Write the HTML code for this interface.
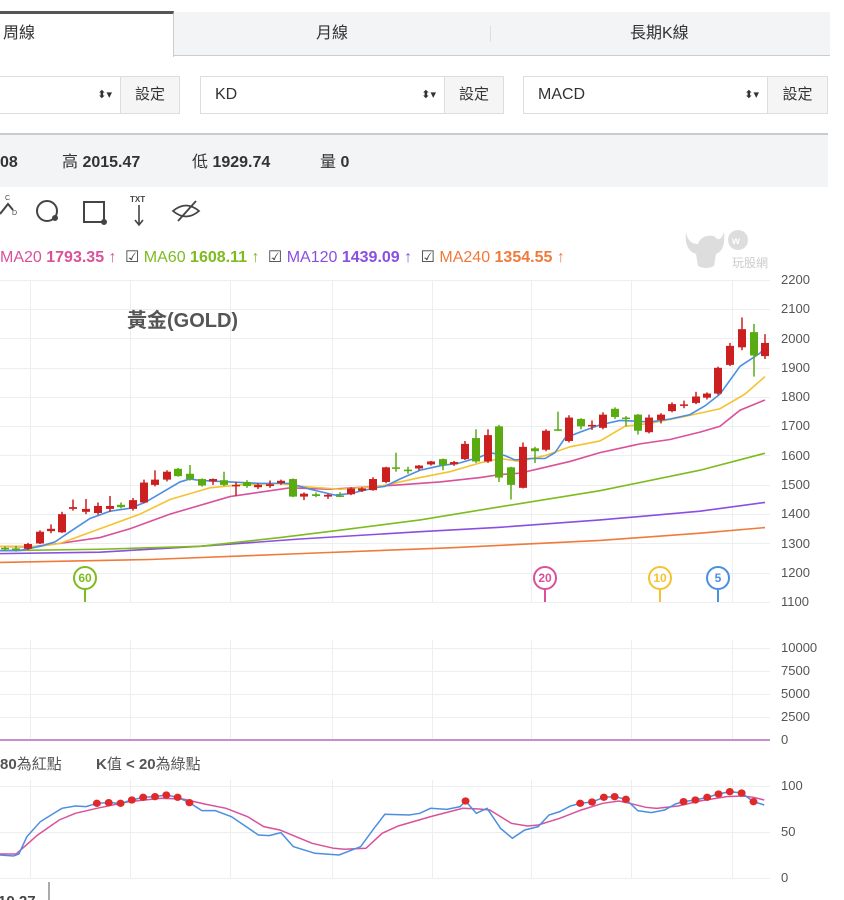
<!DOCTYPE html>
<html><head><meta charset="utf-8"><style>
*{margin:0;padding:0;box-sizing:border-box}
body{width:844px;height:900px;overflow:hidden;background:#fff;font-family:"Liberation Sans","Noto Sans CJK TC",sans-serif;color:#333;position:relative}
.abs{position:absolute}
.tab{position:absolute;top:12px;height:44px;font-size:16px;line-height:44px;color:#333}
.sel{position:absolute;top:76px;height:38px;border:1px solid #ddd;background:#fff;font-size:16px;line-height:36px;padding-left:14px}
.btn{position:absolute;top:76px;height:38px;border:1px solid #ddd;background:#f5f5f5;font-size:15px;line-height:36px;text-align:center}
.arr{position:absolute;right:8px;top:0;font-size:11px;color:#333}
.ax{position:absolute;left:781px;font-size:13px;color:#555}
.inf{position:absolute;top:153px;font-size:16px;color:#333;white-space:nowrap;line-height:20px}
</style></head><body>
<div class="abs" style="left:0;top:12px;width:830px;height:44px;background:#f3f4f5;border-bottom:1px solid #ccc"></div>
<div class="abs" style="left:0;top:11px;width:174px;height:46px;background:#fff;border-top:3px solid #555;border-right:1px solid #ccc"></div>
<div class="tab" style="left:3px">周線</div>
<div class="tab" style="left:316px">月線</div>
<div class="abs" style="left:490px;top:26px;width:1px;height:16px;background:#ddd"></div>
<div class="tab" style="left:630px">長期K線</div>
<div class="sel" style="left:-2px;width:123px"><span class="arr">⬍▾</span></div>
<div class="btn" style="left:120px;width:60px">設定</div>
<div class="sel" style="left:200px;width:245px">KD<span class="arr">⬍▾</span></div>
<div class="btn" style="left:444px;width:60px">設定</div>
<div class="sel" style="left:523px;width:245px">MACD<span class="arr">⬍▾</span></div>
<div class="btn" style="left:767px;width:61px">設定</div>
<div class="abs" style="left:0;top:133px;width:828px;height:54px;background:#f3f4f6;border-top:2px solid #c8ccd0"></div>
<div class="inf" style="left:0"><b>08</b></div>
<div class="inf" style="left:62px">高 <b>2015.47</b></div>
<div class="inf" style="left:192px">低 <b>1929.74</b></div>
<div class="inf" style="left:320px">量 <b>0</b></div>
<svg class="abs" style="left:0;top:192px" width="220" height="40" fill="none" stroke="#444" stroke-width="2">
<text x="5" y="8" font-size="7" fill="#444" stroke="none" font-family="Liberation Sans">C</text>
<path d="M0 22 L8 12 L13 18"/>
<text x="12" y="23" font-size="7" fill="#444" stroke="none" font-family="Liberation Sans">D</text>
<circle cx="47" cy="19" r="10"/><circle cx="55" cy="26" r="2" fill="#444"/>
<rect x="84" y="10" width="20" height="20"/><circle cx="104" cy="30" r="2" fill="#444"/>
<text x="130" y="10" font-size="8" font-weight="bold" fill="#444" stroke="none" font-family="Liberation Sans">TXT</text>
<path d="M139 13 V32 M135 28 L139 33 L143 28" stroke-width="1.6"/>
<path d="M173 19 Q186 8 199 19 Q186 30 173 19 Z" stroke-width="1.8"/><path d="M178 29 L196 9" stroke-width="1.8"/>
</svg>
<div class="abs" style="left:0;top:247px;font-size:16px;white-space:nowrap">
<span style="color:#d9519a">MA20 <b>1793.35</b> ↑</span>
<span style="color:#444;margin-left:4px">☑</span> <span style="color:#7dbb1e">MA60 <b>1608.11</b> ↑</span>
<span style="color:#444;margin-left:4px">☑</span> <span style="color:#8a4fe0">MA120 <b>1439.09</b> ↑</span>
<span style="color:#444;margin-left:4px">☑</span> <span style="color:#f07a3a">MA240 <b>1354.55</b> ↑</span>
</div>
<svg class="abs" style="left:680px;top:224px" width="90" height="48">
<path d="M6 8 Q8 20 18 20 Q22 10 34 12 Q40 20 44 8 Q46 26 36 30 L34 42 Q26 46 18 42 L16 30 Q4 26 6 8Z" fill="#ddd"/>
<circle cx="58" cy="16" r="10" fill="#ddd"/><text x="52" y="20" font-size="10" font-weight="bold" fill="#fff">w</text>
<text x="52" y="43" font-size="12" fill="#ccc" font-family="Noto Sans CJK TC">玩股網</text>
</svg>
<div class="ax" style="top:272px">2200</div><div class="ax" style="top:301px">2100</div><div class="ax" style="top:331px">2000</div><div class="ax" style="top:360px">1900</div><div class="ax" style="top:389px">1800</div><div class="ax" style="top:418px">1700</div><div class="ax" style="top:448px">1600</div><div class="ax" style="top:477px">1500</div><div class="ax" style="top:506px">1400</div><div class="ax" style="top:536px">1300</div><div class="ax" style="top:565px">1200</div><div class="ax" style="top:594px">1100</div>
<div class="ax" style="top:640px">10000</div><div class="ax" style="top:663px">7500</div><div class="ax" style="top:686px">5000</div><div class="ax" style="top:709px">2500</div><div class="ax" style="top:732px">0</div>
<div class="ax" style="top:778px">100</div><div class="ax" style="top:824px">50</div><div class="ax" style="top:870px">0</div>
<svg class="abs" style="left:0;top:0" width="844" height="900">
<g stroke="#eceef0" stroke-width="1">
<path d="M0 280.5H770M0 309.5H770M0 338.5H770M0 368.5H770M0 397.5H770M0 426.5H770M0 455.5H770M0 485.5H770M0 514.5H770M0 543.5H770M0 573.5H770M0 602.5H770"/>
<path d="M30.5 280V602M130.5 280V602M230.5 280V602M332.5 280V602M432.5 280V602M531.5 280V602M631.5 280V602M732.5 280V602"/>
<path d="M0 648.5H770M0 671.5H770M0 694.5H770M0 717.5H770"/>
<path d="M30.5 640V740M130.5 640V740M230.5 640V740M332.5 640V740M432.5 640V740M531.5 640V740M631.5 640V740M732.5 640V740"/>
<path d="M0 786.5H770M0 832.5H770M0 878.5H770"/>
<path d="M30.5 780V878M130.5 780V878M230.5 780V878M332.5 780V878M432.5 780V878M531.5 780V878M631.5 780V878M732.5 780V878"/>
</g>
<line x1="0" y1="740" x2="770" y2="740" stroke="#c68fd0" stroke-width="2"/>
<text x="127" y="327" font-size="20" font-weight="bold" fill="#555" font-family="Liberation Sans,Noto Sans CJK TC">黃金(GOLD)</text>
<g transform="translate(0,923.9) scale(1,-0.2927)" fill="none" stroke-width="1.6">
<polyline vector-effect="non-scaling-stroke" stroke="#f07a3a" points="0,1235 150,1245 300,1265 450,1285 600,1310 700,1335 765,1354"/>
<polyline vector-effect="non-scaling-stroke" stroke="#8a4fe0" points="0,1265 100,1270 200,1290 300,1315 420,1340 500,1355 600,1380 700,1410 765,1440"/>
<polyline vector-effect="non-scaling-stroke" stroke="#7dbb1e" points="0,1275 100,1280 200,1290 280,1320 340,1345 420,1380 500,1425 600,1480 700,1550 765,1608"/>
<polyline vector-effect="non-scaling-stroke" stroke="#d9519a" points="0,1290 30,1288 60,1300 100,1320 130,1350 170,1400 230,1460 290,1490 330,1485 400,1500 440,1510 480,1525 500,1535 520,1540 545,1560 570,1580 600,1610 640,1640 670,1655 700,1680 720,1700 740,1755 765,1790"/>
<polyline vector-effect="non-scaling-stroke" stroke="#f5c230" points="0,1290 40,1290 60,1300 100,1350 140,1400 170,1450 210,1490 240,1500 280,1505 300,1495 340,1485 380,1495 420,1525 450,1545 480,1575 500,1590 520,1580 545,1600 570,1630 600,1650 625,1700 650,1710 680,1730 720,1760 745,1810 765,1870"/>
<polyline vector-effect="non-scaling-stroke" stroke="#4a8fe0" points="0,1275 20,1276 40,1290 55,1305 70,1340 90,1385 110,1410 130,1420 145,1440 160,1470 180,1510 190,1520 200,1515 230,1510 260,1505 290,1505 310,1485 335,1465 350,1470 375,1490 385,1495 400,1520 420,1550 440,1565 460,1575 480,1595 490,1610 505,1600 515,1585 530,1590 545,1590 555,1610 565,1660 580,1680 600,1705 620,1720 650,1715 670,1725 690,1740 705,1770 720,1810 740,1905 760,1950 765,1970"/>
</g>
<g id="candles"></g>
<g font-family="Liberation Sans" font-size="12" font-weight="bold" text-anchor="middle" fill="#fff" stroke-width="2">
<line x1="85" y1="590" x2="85" y2="602" stroke="#7dbb1e"/><circle cx="85" cy="578" r="11" stroke="#7dbb1e"/><text x="85" y="582" fill="#7dbb1e">60</text>
<line x1="545" y1="590" x2="545" y2="602" stroke="#d9519a"/><circle cx="545" cy="578" r="11" stroke="#d9519a"/><text x="545" y="582" fill="#d9519a">20</text>
<line x1="660" y1="590" x2="660" y2="602" stroke="#f5c230"/><circle cx="660" cy="578" r="11" stroke="#f5c230"/><text x="660" y="582" fill="#f5c230">10</text>
<line x1="718" y1="590" x2="718" y2="602" stroke="#4a8fe0"/><circle cx="718" cy="578" r="11" stroke="#4a8fe0"/><text x="718" y="582" fill="#4a8fe0">5</text>
</g>
<text x="0" y="769" font-size="15" font-weight="bold" fill="#555" font-family="Liberation Sans,Noto Sans CJK TC">80<tspan font-weight="normal">為紅點</tspan></text>
<text x="96" y="769" font-size="15" font-weight="bold" fill="#555" font-family="Liberation Sans,Noto Sans CJK TC">K<tspan font-weight="normal">值</tspan> &lt; 20<tspan font-weight="normal">為綠點</tspan></text>
<g transform="translate(0,600) scale(0.5382,0.3333)" fill="none" stroke-width="1.5">
<polyline vector-effect="non-scaling-stroke" stroke="#d9519a" points="0,762 30,762 70,705 110,660 140,640 180,625 240,605 300,595 340,597 380,612 420,625 460,650 490,680 520,690 550,710 580,730 620,745 640,748 680,745 710,700 740,678 800,650 860,625 890,627 910,630 950,670 980,678 1000,675 1040,655 1080,630 1120,610 1150,603 1170,610 1200,622 1220,625 1260,618 1300,603 1350,590 1380,588 1400,592 1420,600"/>
<polyline vector-effect="non-scaling-stroke" stroke="#4a8fe0" points="0,765 25,768 35,762 50,710 75,665 115,625 140,618 160,620 180,610 202,608 224,610 245,600 266,592 288,590 309,585 330,592 352,608 375,632 400,632 430,650 460,683 480,705 500,707 522,698 545,740 585,760 630,765 670,740 695,685 715,643 760,645 780,640 800,625 830,628 855,620 865,603 885,640 905,625 930,685 952,715 975,690 1000,680 1020,645 1040,635 1060,618 1078,610 1100,606 1122,592 1142,590 1163,598 1185,632 1210,638 1235,630 1255,612 1270,605 1292,600 1314,592 1335,582 1356,575 1378,579 1400,605 1420,615"/>
<g fill="#e02a2a" stroke="none">
<ellipse cx="180" cy="610" rx="7.4" ry="11"/><ellipse cx="202" cy="608" rx="7.4" ry="11"/><ellipse cx="224" cy="610" rx="7.4" ry="11"/><ellipse cx="245" cy="600" rx="7.4" ry="11"/><ellipse cx="266" cy="592" rx="7.4" ry="11"/><ellipse cx="288" cy="590" rx="7.4" ry="11"/><ellipse cx="309" cy="585" rx="7.4" ry="11"/><ellipse cx="330" cy="592" rx="7.4" ry="11"/><ellipse cx="352" cy="608" rx="7.4" ry="11"/>
<ellipse cx="865" cy="603" rx="7.4" ry="11"/>
<ellipse cx="1078" cy="610" rx="7.4" ry="11"/><ellipse cx="1100" cy="606" rx="7.4" ry="11"/><ellipse cx="1122" cy="592" rx="7.4" ry="11"/><ellipse cx="1142" cy="590" rx="7.4" ry="11"/><ellipse cx="1163" cy="598" rx="7.4" ry="11"/>
<ellipse cx="1270" cy="605" rx="7.4" ry="11"/><ellipse cx="1292" cy="600" rx="7.4" ry="11"/><ellipse cx="1314" cy="592" rx="7.4" ry="11"/><ellipse cx="1335" cy="582" rx="7.4" ry="11"/><ellipse cx="1356" cy="575" rx="7.4" ry="11"/><ellipse cx="1378" cy="579" rx="7.4" ry="11"/><ellipse cx="1400" cy="605" rx="7.4" ry="11"/>
</g></g>
<line x1="49" y1="882" x2="49" y2="900" stroke="#555"/>
<text x="-2" y="906" font-size="15" font-weight="bold" fill="#444" font-family="Liberation Sans">10.27</text>
</svg>
<script>
var d=[[5,1285,1280,1290,1275],[16,1283,1278,1292,1272],[28,1282,1298,1302,1278],[40,1300,1340,1345,1298],[51,1342,1350,1365,1335],[62,1338,1400,1408,1336],[73,1418,1424,1450,1412],[86,1408,1418,1452,1400],[98,1404,1428,1440,1398],[110,1418,1428,1462,1408],[121,1432,1424,1440,1420],[133,1418,1448,1455,1412],[144,1440,1508,1518,1438],[155,1500,1518,1550,1495],[167,1518,1545,1550,1512],[178,1555,1530,1558,1528],[190,1538,1520,1568,1515],[202,1520,1498,1522,1494],[213,1512,1520,1522,1500],[224,1516,1500,1545,1496],[236,1496,1500,1510,1462],[247,1510,1496,1516,1490],[258,1492,1500,1505,1486],[270,1496,1502,1515,1490],[281,1506,1514,1518,1500],[293,1520,1460,1522,1458],[304,1460,1470,1474,1448],[316,1468,1462,1474,1458],[328,1460,1466,1470,1452],[340,1464,1460,1475,1458],[351,1468,1488,1492,1465],[362,1480,1488,1492,1476],[373,1482,1520,1526,1480],[386,1510,1560,1562,1506],[396,1560,1558,1610,1545],[408,1552,1548,1562,1538],[419,1556,1566,1568,1550],[431,1570,1580,1582,1566],[443,1588,1568,1590,1550],[454,1570,1578,1582,1565],[465,1588,1640,1650,1585],[476,1660,1580,1690,1575],[488,1580,1670,1690,1575],[499,1700,1525,1705,1510],[511,1560,1500,1562,1450],[523,1490,1630,1645,1488],[535,1625,1615,1630,1575],[546,1620,1685,1690,1615],[558,1690,1686,1750,1684],[569,1650,1730,1738,1645],[581,1725,1700,1728,1690],[592,1700,1705,1720,1688],[603,1695,1740,1748,1690],[615,1760,1732,1765,1725],[626,1730,1725,1735,1700],[638,1740,1685,1742,1672],[649,1680,1730,1740,1676],[661,1722,1740,1745,1710],[672,1752,1776,1782,1748],[684,1770,1775,1788,1762],[696,1780,1802,1818,1776],[707,1798,1812,1816,1792],[718,1812,1900,1904,1808],[730,1910,1975,1985,1906],[742,1970,2032,2072,1960],[754,2022,1942,2050,1870],[765,1940,1985,2015,1930]];
function Y(p){return 280+(2200-p)*0.2927}
var s='';d.forEach(function(c){var col=c[2]>=c[1]?'#cc1f1f':'#5aab12';var t=Y(Math.max(c[1],c[2])),b=Y(Math.min(c[1],c[2]));var h=Math.max(b-t,1.5);
s+='<line x1="'+c[0]+'" x2="'+c[0]+'" y1="'+Y(c[3])+'" y2="'+Y(c[4])+'" stroke="'+col+'" stroke-width="1.5"/><rect x="'+(c[0]-4)+'" y="'+t+'" width="8" height="'+h+'" fill="'+col+'"/>';});
document.getElementById('candles').innerHTML=s;
</script>
</body></html>
